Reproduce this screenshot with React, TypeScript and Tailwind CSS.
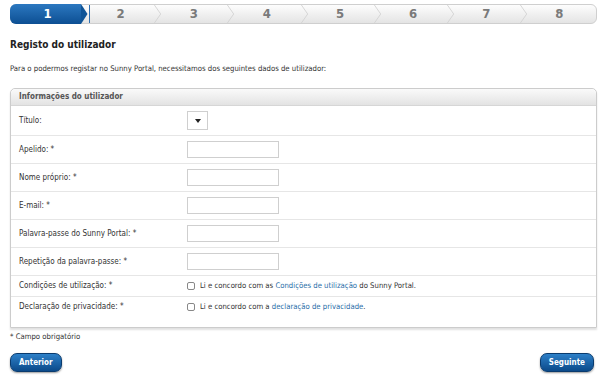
import React from "react";

const steps = ["1", "2", "3", "4", "5", "6", "7", "8"];

const rows = [
  { label: "Título:", kind: "select" },
  { label: "Apelido: *", kind: "input" },
  { label: "Nome próprio: *", kind: "input" },
  { label: "E-mail: *", kind: "input" },
  { label: "Palavra-passe do Sunny Portal: *", kind: "input" },
  { label: "Repetição da palavra-passe: *", kind: "input" },
];

const Chevron = () => (
  <svg className="absolute right-[-6px] top-0 h-full w-[10px]" viewBox="0 0 10 20" fill="none">
    <path d="M1 0 L8 10 L1 20" stroke="#d2d2d2" strokeWidth="1" />
  </svg>
);

const StepBar = () => {
  return (
    <div className="flex h-[20px] rounded-[6px] border border-[#cfcfcf] bg-gradient-to-b from-[#fdfdfd] to-[#e4e4e4]">
      {steps.map((s, i) =>
        i === 0 ? (
          <div key={s} className="relative flex flex-1 items-center justify-center">
            <div className="absolute inset-y-[-1px] left-[-1px] right-[3px] rounded-l-[6px] bg-gradient-to-b from-[#2b78c0] to-[#0c4f93]" />
            <svg className="absolute right-[-4px] top-[-1px] h-[20px] w-[7px]" viewBox="0 0 7 20">
              <path d="M0 0 L6.5 10 L0 20 Z" fill="#0f5497" />
            </svg>
            <div className="absolute right-[-6px] top-0 h-full w-px bg-[#2f6fb0]" />
            <span className="relative text-[13px] font-bold text-white">{s}</span>
          </div>
        ) : (
          <div key={s} className="relative flex flex-1 items-center justify-center">
            <span className="text-[13px] font-bold text-[#7a7a7a]">{s}</span>
            {i < 7 && <Chevron />}
          </div>
        )
      )}
    </div>
  );
};

const Row = ({ children, label, h }: { children: React.ReactNode; label: string; h: string }) => (
  <div className={`flex items-center border-b border-[#e6e6e6] ${h}`}>
    <div className="w-[176px] shrink-0 pl-[8px] text-[#333]">{label}</div>
    <div className="flex items-center">{children}</div>
  </div>
);

export default function App() {
  return (
    <div
      className="min-h-[385px] w-[602px] bg-white pl-[10px] pr-[5px] pt-[4px] text-[8px] leading-[10px] text-[#333]"
      style={{ fontFamily: "'DejaVu Sans Condensed', 'DejaVu Sans', sans-serif" }}
    >
      <StepBar />

      <h1 className="mt-[15px] text-[10px] font-bold leading-[12px] text-[#222]">Registo do utilizador</h1>
      <p className="mt-[13px] text-[7.7px]">
        Para o podermos registar no Sunny Portal, necessitamos dos seguintes dados de utilizador:
      </p>

      <div className="mt-[14px] rounded-t-[5px] border border-[#cccccc] shadow-[0_2px_2px_rgba(0,0,0,0.12)]">
        <div className="flex h-[17px] items-center rounded-t-[5px] border-b border-[#d6d6d6] bg-gradient-to-b from-[#fafafa] to-[#e3e3e3] pl-[8px] text-[8px] font-bold text-[#555]">
          Informações do utilizador
        </div>

        {rows.map((r, i) => (
          <Row key={r.label} label={r.label} h={i === 0 ? "h-[30px]" : "h-[28px]"}>
            {r.kind === "select" ? (
              <div className="flex h-[19px] w-[21px] items-center justify-center border border-[#cfcfcf] bg-white">
                <svg width="6" height="4" viewBox="0 0 6 4">
                  <path d="M0 0 H6 L3 4 Z" fill="#222" />
                </svg>
              </div>
            ) : (
              <div className="h-[17px] w-[92px] border border-[#cfcfcf] bg-white" />
            )}
          </Row>
        ))}

        <Row label="Condições de utilização: *" h="h-[21px]">
          <span className="mr-[5px] h-[8px] w-[8px] rounded-[2px] border border-[#888] bg-white" />
          <span className="text-[7.7px]">
            Li e concordo com as <span className="text-[#2a6ea8]">Condições de utilização</span> do Sunny Portal.
          </span>
        </Row>
        <div className="flex h-[30px] items-start pt-[5px]">
          <div className="w-[176px] shrink-0 pl-[8px]">Declaração de privacidade: *</div>
          <div className="flex items-center">
            <span className="mr-[5px] h-[8px] w-[8px] rounded-[2px] border border-[#888] bg-white" />
            <span className="text-[7.7px]">
              Li e concordo com a <span className="text-[#2a6ea8]">declaração de privacidade</span>.
            </span>
          </div>
        </div>
      </div>

      <p className="mt-[4px] text-[7.7px]">* Campo obrigatório</p>

      <div className="mt-[11px] flex justify-between pr-[3px]">
        <button className="h-[19px] rounded-[7px] border border-[#0a3b6e] bg-gradient-to-b from-[#2d80c8] to-[#0b4a8a] px-[8px] text-[8px] font-bold text-white shadow-[0_1px_2px_rgba(0,0,0,0.4)]">
          Anterior
        </button>
        <button className="h-[19px] rounded-[7px] border border-[#0a3b6e] bg-gradient-to-b from-[#2d80c8] to-[#0b4a8a] px-[8px] text-[8px] font-bold text-white shadow-[0_1px_2px_rgba(0,0,0,0.4)]">
          Seguinte
        </button>
      </div>
    </div>
  );
}
